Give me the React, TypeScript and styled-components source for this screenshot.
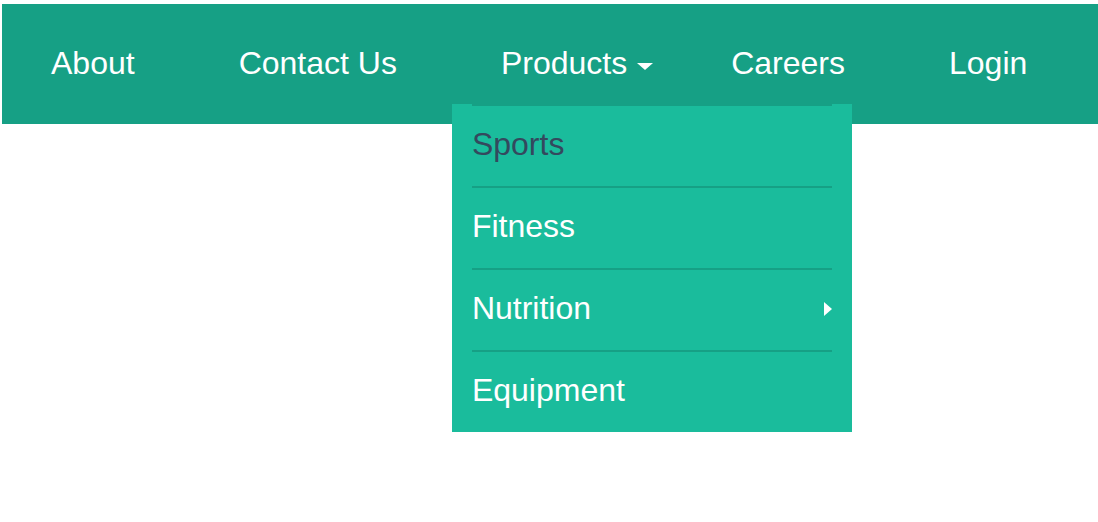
import React from "react";
import styled, { createGlobalStyle } from "styled-components";

const GlobalStyle = createGlobalStyle`
  html, body {
    margin: 0;
    padding: 0;
    background: #ffffff;
    font-family: "Liberation Sans", Arial, Helvetica, sans-serif;
  }
  #root {
    min-height: 100vh;
    overflow: visible;
  }
`;

const Page = styled.div`
  min-height: 522px;
  padding: 4px 0 0 2px;
  box-sizing: border-box;
  overflow: visible;
`;

const NavBar = styled.nav`
  position: relative;
  z-index: 1;
  height: 120px;
  background: #16a085;
`;

const Menu = styled.ul`
  list-style: none;
  margin: 0;
  padding: 0;
  display: flex;
  gap: 6px;
  height: 100%;
`;

const MenuItem = styled.li`
  position: relative;
  padding: 0 49px;
  line-height: 118px;
  font-size: 32px;
  color: #ffffff;
  white-space: nowrap;
`;

const CaretDown = styled.span`
  position: absolute;
  top: 59px;
  right: 23px;
  width: 0;
  height: 0;
  border-left: 8px solid transparent;
  border-right: 8px solid transparent;
  border-top: 7px solid #ffffff;
`;

const Dropdown = styled.ul`
  position: absolute;
  z-index: 2;
  left: 0;
  top: 100px;
  width: 400px;
  margin: 0;
  padding: 0 20px;
  box-sizing: border-box;
  list-style: none;
  background: #1abc9c;
`;

const DropItem = styled.li<{ $active?: boolean }>`
  position: relative;
  height: 80px;
  line-height: 76px;
  border-top: 2px solid #16a085;
  font-size: 32px;
  color: ${(p) => (p.$active ? "#34495e" : "#ffffff")};
`;

const CaretRight = styled.span`
  position: absolute;
  right: 0;
  top: 32px;
  width: 0;
  height: 0;
  border-top: 7px solid transparent;
  border-bottom: 7px solid transparent;
  border-left: 8px solid #ffffff;
`;

export default function App() {
  return (
    <Page>
      <GlobalStyle />
      <NavBar>
        <Menu>
          <MenuItem>About</MenuItem>
          <MenuItem>Contact Us</MenuItem>
          <MenuItem>
            Products
            <CaretDown />
            <Dropdown>
              <DropItem $active>Sports</DropItem>
              <DropItem>Fitness</DropItem>
              <DropItem>
                Nutrition
                <CaretRight />
              </DropItem>
              <DropItem>Equipment</DropItem>
            </Dropdown>
          </MenuItem>
          <MenuItem>Careers</MenuItem>
          <MenuItem>Login</MenuItem>
        </Menu>
      </NavBar>
    </Page>
  );
}
